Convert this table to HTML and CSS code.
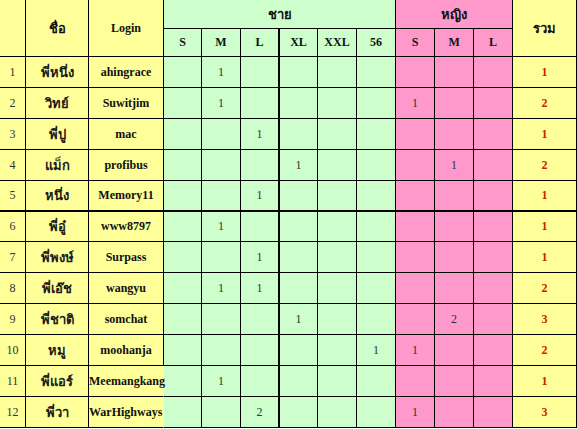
FILE: index.html
```html
<!DOCTYPE html>
<html>
<head>
<meta charset="utf-8">
<link rel="stylesheet" href="styles.css">
</head>
<body>
<table class="sheet">
  <colgroup>
    <col class="w-no"><col class="w-name"><col class="w-login">
    <col class="w-38"><col class="w-39"><col class="w-39">
    <col class="w-38"><col class="w-39"><col class="w-39">
    <col class="w-39"><col class="w-39"><col class="w-39">
    <col class="w-total">
  </colgroup>
  <thead>
    <tr class="h1">
      <th class="y" rowspan="2"></th>
      <th class="y thai" rowspan="2">ชื่อ</th>
      <th class="y" rowspan="2">Login</th>
      <th class="g thai" colspan="6">ชาย</th>
      <th class="p thai" colspan="3">หญิง</th>
      <th class="y thai red" rowspan="2">รวม</th>
    </tr>
    <tr class="h2">
      <th class="g">S</th><th class="g">M</th><th class="g thick-r">L</th>
      <th class="g">XL</th><th class="g">XXL</th><th class="g">56</th>
      <th class="p">S</th><th class="p">M</th><th class="p">L</th>
    </tr>
  </thead>
  <tbody>
    <tr>
      <td class="y no">1</td><td class="y thai">พี่หนึ่ง</td><td class="y login">ahingrace</td>
      <td class="g"></td><td class="g">1</td><td class="g thick-r"></td><td class="g"></td><td class="g"></td><td class="g"></td>
      <td class="p"></td><td class="p"></td><td class="p"></td><td class="y total">1</td>
    </tr>
    <tr>
      <td class="y no">2</td><td class="y thai">วิทย์</td><td class="y login">Suwitjim</td>
      <td class="g"></td><td class="g">1</td><td class="g thick-r"></td><td class="g"></td><td class="g"></td><td class="g"></td>
      <td class="p">1</td><td class="p"></td><td class="p"></td><td class="y total">2</td>
    </tr>
    <tr>
      <td class="y no">3</td><td class="y thai">พี่ปู</td><td class="y login">mac</td>
      <td class="g"></td><td class="g"></td><td class="g thick-r">1</td><td class="g"></td><td class="g"></td><td class="g"></td>
      <td class="p"></td><td class="p"></td><td class="p"></td><td class="y total">1</td>
    </tr>
    <tr>
      <td class="y no">4</td><td class="y thai">แม็ก</td><td class="y login">profibus</td>
      <td class="g"></td><td class="g"></td><td class="g thick-r"></td><td class="g">1</td><td class="g"></td><td class="g"></td>
      <td class="p"></td><td class="p">1</td><td class="p"></td><td class="y total">2</td>
    </tr>
    <tr class="thick-b">
      <td class="y no">5</td><td class="y thai">หนึ่ง</td><td class="y login">Memory11</td>
      <td class="g"></td><td class="g"></td><td class="g thick-r">1</td><td class="g"></td><td class="g"></td><td class="g"></td>
      <td class="p"></td><td class="p"></td><td class="p"></td><td class="y total">1</td>
    </tr>
    <tr class="short">
      <td class="y no">6</td><td class="y thai">พี่อู๋</td><td class="y login">www8797</td>
      <td class="g"></td><td class="g">1</td><td class="g thick-r"></td><td class="g"></td><td class="g"></td><td class="g"></td>
      <td class="p"></td><td class="p"></td><td class="p"></td><td class="y total">1</td>
    </tr>
    <tr>
      <td class="y no">7</td><td class="y thai">พี่พงษ์</td><td class="y login">Surpass</td>
      <td class="g"></td><td class="g"></td><td class="g thick-r">1</td><td class="g"></td><td class="g"></td><td class="g"></td>
      <td class="p"></td><td class="p"></td><td class="p"></td><td class="y total">1</td>
    </tr>
    <tr>
      <td class="y no">8</td><td class="y thai">พี่เอ๊ช</td><td class="y login">wangyu</td>
      <td class="g"></td><td class="g">1</td><td class="g thick-r">1</td><td class="g"></td><td class="g"></td><td class="g"></td>
      <td class="p"></td><td class="p"></td><td class="p"></td><td class="y total">2</td>
    </tr>
    <tr>
      <td class="y no">9</td><td class="y thai">พี่ชาติ</td><td class="y login">somchat</td>
      <td class="g"></td><td class="g"></td><td class="g thick-r"></td><td class="g">1</td><td class="g"></td><td class="g"></td>
      <td class="p"></td><td class="p">2</td><td class="p"></td><td class="y total">3</td>
    </tr>
    <tr>
      <td class="y no">10</td><td class="y thai">หมู</td><td class="y login">moohanja</td>
      <td class="g"></td><td class="g"></td><td class="g thick-r"></td><td class="g"></td><td class="g"></td><td class="g">1</td>
      <td class="p">1</td><td class="p"></td><td class="p"></td><td class="y total">2</td>
    </tr>
    <tr>
      <td class="y no">11</td><td class="y thai">พี่แอร์</td><td class="y login over">Meemangkang</td>
      <td class="g"></td><td class="g">1</td><td class="g thick-r"></td><td class="g"></td><td class="g"></td><td class="g"></td>
      <td class="p"></td><td class="p"></td><td class="p"></td><td class="y total">1</td>
    </tr>
    <tr>
      <td class="y no">12</td><td class="y thai">พี่วา</td><td class="y login over">WarHighways</td>
      <td class="g"></td><td class="g"></td><td class="g thick-r">2</td><td class="g"></td><td class="g"></td><td class="g"></td>
      <td class="p">1</td><td class="p"></td><td class="p"></td><td class="y total">3</td>
    </tr>
  </tbody>
</table>
</body>
</html>
```
FILE: styles.css
```css
html, body {
  margin: 0;
  padding: 0;
  background: #ffffff;
}

.sheet {
  border-collapse: separate;
  border-spacing: 0;
  table-layout: fixed;
  width: 577px;
  font-family: "Liberation Serif", "Times New Roman", serif;
  font-size: 12px;
  color: #333333;
}

.w-no { width: 26px; }
.w-name { width: 63px; }
.w-login { width: 75px; }
.w-38 { width: 38px; }
.w-39 { width: 39px; }
.w-total { width: 64px; }

.sheet th,
.sheet td {
  box-sizing: border-box;
  padding: 0;
  text-align: center;
  vertical-align: middle;
  border-right: 1px solid #000;
  border-bottom: 1px solid #000;
  white-space: nowrap;
  overflow: visible;
}

.sheet th {
  font-weight: bold;
  color: #111;
}

.h1 th { height: 29px; }
.h2 th { height: 28px; }
.sheet tbody tr td { height: 31px; }
.sheet tbody tr.short td { height: 30px; }

.y { background: #ffff99; }
.g { background: #ccffcc; }
.p { background: #ff99cc; }

.thai {
  font-family: "Liberation Serif", "Noto Sans", "DejaVu Sans", serif;
  font-weight: bold;
  font-size: 13px;
  color: #1a1a1a;
}

.red { color: #e01010; }

.login {
  font-weight: bold;
  color: #111;
}

.login.over {
  text-align: left;
  border-right-color: transparent;
  border-right-color: #ffff99;
}

.total {
  font-weight: bold;
  color: #cc2200;
}

.thick-r { border-right-width: 2px !important; }
.thick-b td { border-bottom-width: 2px; }
```
